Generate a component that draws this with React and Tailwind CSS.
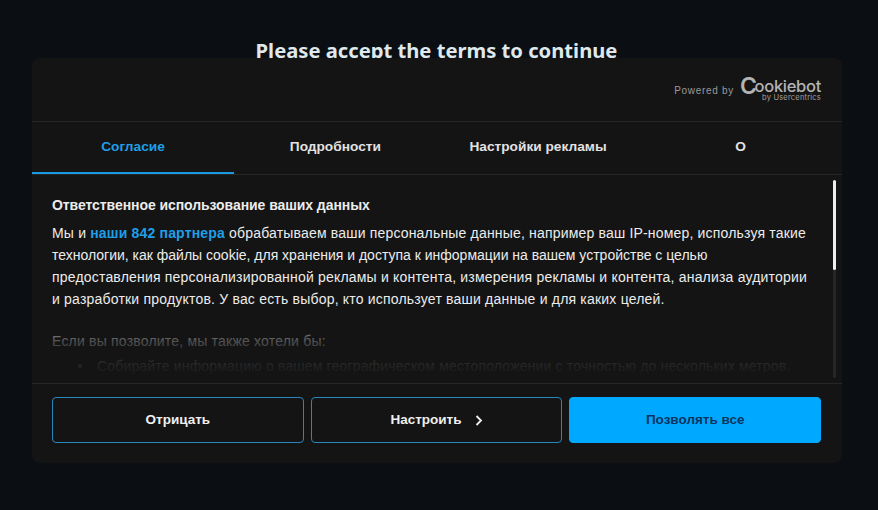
const sans = { fontFamily: '"Liberation Sans", Arial, sans-serif' };

function Tab({ children, active }) {
  return (
    <div
      className={`flex items-center justify-center text-[13.7px] font-bold border-b-2 ${
        active ? "w-[202px] flex-none text-[#1f9fe8] border-[#1a9ae0]" : "flex-1 text-[#e2e2e2] border-transparent"
      }`}
    >
      {children}
    </div>
  );
}

function Btn({ children, primary }) {
  return (
    <button
      className={`flex h-[46px] flex-1 items-center justify-center rounded-[4px] border text-[13.5px] font-bold ${
        primary
          ? "border-[#00a8ff] bg-[#00a8ff] text-[#0a3560]"
          : "border-[#2a86bd] bg-[#141414] text-[#f0f0f0]"
      }`}
    >
      {children}
    </button>
  );
}

export default function App() {
  return (
    <div className="relative h-[510px] w-[878px] overflow-hidden bg-[#0b0f13]" style={sans}>
      <h1
        className="pt-[36px] pr-[5px] text-center text-[20.2px] leading-[28px] font-bold text-[#dfe8ec]"
        style={{ fontFamily: '"Noto Sans", sans-serif' }}
      >
        Please accept the terms to continue
      </h1>
      <div className="absolute top-[58px] left-[32px] flex h-[405px] w-[810px] flex-col overflow-hidden rounded-[8px] bg-[#141414]">
        <div className="flex h-[64px] shrink-0 items-center justify-end gap-[6px] border-b border-[#262626] pr-[21px]">
          <span className="mt-[1px] text-[10px] tracking-[0.7px] text-[#9a9a9a]">Powered by</span>
          <div className="flex flex-col items-end text-[#b4b4b4]" style={{ fontFamily: 'Inter, sans-serif' }}>
            <span className="flex items-end text-[16.5px] leading-[16px] font-medium tracking-[-0.3px]">
              <span className="mr-[-2px] text-[23px] leading-[16px] font-semibold">C</span>ookiebot
            </span>
            <span className="text-[7.5px] leading-[8px] tracking-[0.2px] text-[#a0a0a0]">by Usercentrics</span>
          </div>
        </div>
        <div className="flex h-[53px] shrink-0 border-b border-[#262626]">
          <Tab active>Согласие</Tab>
          <Tab>Подробности</Tab>
          <Tab>Настройки рекламы</Tab>
          <Tab>О</Tab>
        </div>
        <div className="relative min-h-0 flex-1 overflow-hidden pt-[20px] pl-[20px] text-[14px] leading-[22px] text-[#ececec]">
          <h2 className="text-[14px] leading-[20px] font-bold tracking-[-0.07px]">Ответственное использование ваших данных</h2>
          <p className="mt-[7px] whitespace-nowrap">
            <span className="block tracking-[0.18px]">
              Мы и <span className="font-bold text-[#1f9fe8]">наши 842 партнера</span> обрабатываем ваши персональные
              данные, например ваш IP-номер, используя такие
            </span>
            <span className="block">
              технологии, как файлы cookie, для хранения и доступа к информации на вашем устройстве с целью
            </span>
            <span className="block tracking-[0.19px]">
              предоставления персонализированной рекламы и контента, измерения рекламы и контента, анализа аудитории
            </span>
            <span className="block tracking-[0.2px]">
              и разработки продуктов. У вас есть выбор, кто использует ваши данные и для каких целей.
            </span>
          </p>
          <p className="mt-[20px] tracking-[0.2px]">Если вы позволите, мы также хотели бы:</p>
          <ul className="mt-[3px] tracking-[0.17px]">
            <li className="flex items-center whitespace-nowrap pl-[26px]">
              <span className="mr-[15px] h-[4px] w-[4px] rounded-full bg-[#ececec]" />
              Собирайте информацию о вашем географическом местоположении с точностью до нескольких метров.
            </li>
          </ul>
          <div className="pointer-events-none absolute inset-x-0 bottom-0 h-[73px] bg-gradient-to-b from-[#141414]/0 via-[#141414]/75 via-45% to-[#141414] to-90%" />
          <div className="absolute top-[5px] right-[6px] bottom-[5px] w-[3px] rounded-full bg-[#262626]">
            <div className="h-[90px] w-[3px] rounded-full bg-[#eeeeee]" />
          </div>
        </div>
        <div className="flex h-[80px] shrink-0 gap-[7px] border-t border-[#262626] pt-[13px] pr-[21px] pl-[20px]">
          <Btn>Отрицать</Btn>
          <Btn>
            Настроить
            <svg className="ml-[13px]" width="8" height="11" viewBox="0 0 8 11" fill="none" stroke="#f0f0f0" strokeWidth="1.8">
              <path d="M1.5 1 L6 5.5 L1.5 10" />
            </svg>
          </Btn>
          <Btn primary>Позволять все</Btn>
        </div>
      </div>
    </div>
  );
}
